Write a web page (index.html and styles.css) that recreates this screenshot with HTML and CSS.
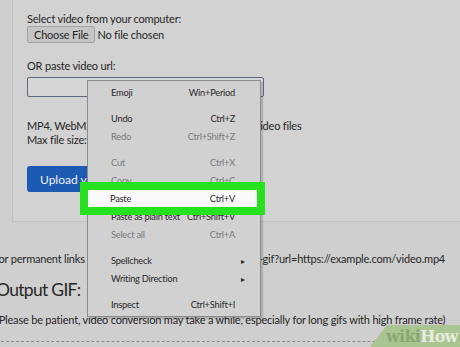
FILE: index.html
```html
<!DOCTYPE html>
<html>
<head>
  <title>Video to GIF</title>
  <link rel="stylesheet" href="styles.css">
</head>
<body>
  <div class="page">
    <div class="panel">
      <p class="label">Select video from your computer:</p>
      <div class="file-row">
        <button class="file-button">Choose File</button>
        <span>No file chosen</span>
      </div>
      <p class="label url-label">OR paste video url:</p>
      <input class="url-input" type="text">
      <p class="formats">MP4, WebM, AVI, MKV, FLV, MOV, 3GP or other video files<br>Max file size: 100MB</p>
      <button class="upload-button">Upload video!</button>
    </div>

    <p class="note">For permanent links you can use: http://ezgif.com/mp4-to-gif?url=https://example.com/video.mp4</p>
    <h2>Output GIF:</h2>
    <p class="wait">(Please be patient, video conversion may take a while, especially for long gifs with high frame rate)</p>
    <div class="divider"></div>
  </div>

  <!-- right-click menu over the url field -->
  <ul class="context-menu">
    <li><span>Emoji</span><span>Win+Period</span></li>
    <li class="sep"></li>
    <li><span>Undo</span><span>Ctrl+Z</span></li>
    <li class="off"><span>Redo</span><span>Ctrl+Shift+Z</span></li>
    <li class="sep"></li>
    <li class="off"><span>Cut</span><span>Ctrl+X</span></li>
    <li class="off"><span>Copy</span><span>Ctrl+C</span></li>
    <li><span>Paste</span><span>Ctrl+V</span></li>
    <li><span>Paste as plain text</span><span>Ctrl+Shift+V</span></li>
    <li class="off"><span>Select all</span><span>Ctrl+A</span></li>
    <li class="sep"></li>
    <li><span>Spellcheck</span><span class="arrow">&#9656;</span></li>
    <li><span>Writing Direction</span><span class="arrow">&#9656;</span></li>
    <li class="sep"></li>
    <li><span>Inspect</span><span>Ctrl+Shift+I</span></li>
  </ul>

  <div class="highlight">
    <div class="highlight-row"><span>Paste</span><span>Ctrl+V</span></div>
  </div>

  <div class="wikihow"><span class="wiki">wiki</span><span class="how">How</span></div>
</body>
</html>
```

FILE: styles.css
```css
body {
  margin: 0;
  background-color: #cfcfcf;
  font-family: Lato, Arial, sans-serif;
  color: #262626;
  overflow: hidden;
  width: 460px;
  height: 347px;
  position: relative;
}
.page {
  margin-left: -4px;
  width: 520px;
  white-space: nowrap;
  letter-spacing: -0.2px;
}
.panel {
  margin-left: 16px;
  margin-top: -20px;
  padding: 31px 14px 29px;
  border: 1px solid #c2c2c2;
  background-color: #d2d2d2;
  font-size: 11px;
}
.label {
  margin: 0;
  line-height: 14px;
}
.file-row {
  display: flex;
  align-items: center;
  gap: 2px;
  margin-top: 0;
}
.file-button {
  font-family: inherit;
  font-size: 11px;
  letter-spacing: -0.2px;
  color: #262626;
  background-color: #c5c5c5;
  border: 1px solid #a3a3a3;
  border-radius: 2px;
  padding: 0 6px;
  height: 17px;
}
.url-label {
  margin-top: 16px;
}
.url-input {
  display: block;
  margin-top: 4px;
  width: 237px;
  height: 20px;
  box-sizing: border-box;
  border: 1px solid #5c6779;
  border-radius: 2px;
  background-color: #d6d6d6;
}
.formats {
  margin: 22px 0 0;
  line-height: 14px;
}
.upload-button {
  display: block;
  margin-top: 19px;
  font-family: inherit;
  font-size: 12px;
  color: #f2f2f2;
  background-color: #1d5ab4;
  border: none;
  border-radius: 3px;
  padding: 0 13px;
  height: 26px;
}
.note {
  font-size: 11px;
  margin: 30px 0 0;
  text-indent: -3px;
}
h2 {
  font-weight: normal;
  font-size: 17.5px;
  letter-spacing: -0.7px;
  margin: 13px 0 0;
  line-height: 24px;
}
.wait {
  font-size: 11px;
  margin: 11px 0 0;
}
.divider {
  margin-top: 15px;
  border-top: 1px dashed #8a8a8a;
}

.context-menu {
  position: absolute;
  left: 87px;
  top: 80px;
  width: 172px;
  margin: 0;
  padding: 3px 0 2px;
  list-style: none;
  background-color: #d1d1d1;
  border: 1px solid #8c8c8c;
  box-shadow: 2px 2px 1px rgba(0,0,0,0.15);
  font-family: Lato, Arial, sans-serif;
  font-size: 9.3px;
  letter-spacing: -0.25px;
  color: #2a2a2a;
  white-space: nowrap;
}
.context-menu li {
  display: flex;
  justify-content: space-between;
  padding: 0 25px 0 23px;
  height: 18px;
  line-height: 18px;
}
.context-menu li.sep {
  height: 8px;
}
.context-menu li.off {
  color: #7a7a7a;
}
.context-menu .arrow {
  font-size: 8px;
  margin-right: -10px;
}

.highlight {
  position: absolute;
  left: 80px;
  top: 182px;
  width: 169px;
  height: 17px;
  padding: 8px;
  background-color: #27e01f;
}
.highlight-row {
  display: flex;
  justify-content: space-between;
  height: 17px;
  line-height: 17px;
  padding: 0 22px 0 22px;
  background-color: #fafafa;
  font-size: 9.3px;
  letter-spacing: -0.25px;
  color: #2a2a2a;
}

.wikihow {
  position: absolute;
  right: 0;
  bottom: 0;
  width: 74px;
  height: 22px;
  padding-left: 16px;
  background-color: #abc592;
  clip-path: polygon(17px 0, 100% 0, 100% 100%, 0 100%);
  font-family: "DejaVu Serif", serif;
  font-weight: bold;
  font-size: 16px;
  letter-spacing: -0.7px;
  line-height: 23px;
}
.wiki {
  color: #8aa672;
}
.how {
  color: #e6eddf;
}
```
